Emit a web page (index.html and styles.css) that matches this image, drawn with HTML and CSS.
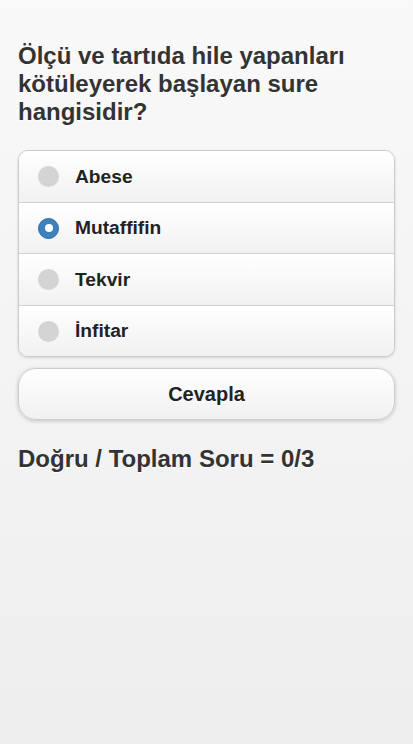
FILE: index.html
```html
<!DOCTYPE html>
<html lang="tr">
<head>
<meta charset="utf-8">
<title>Soru</title>
<link rel="stylesheet" href="styles.css">
</head>
<body>
<div class="page">
  <h2 class="question">Ölçü ve tartıda hile yapanları kötüleyerek başlayan sure hangisidir?</h2>
  <div class="options">
    <div class="option"><span class="radio"></span><span class="label">Abese</span></div>
    <div class="option"><span class="radio on"></span><span class="label">Mutaffifin</span></div>
    <div class="option"><span class="radio"></span><span class="label">Tekvir</span></div>
    <div class="option"><span class="radio"></span><span class="label">İnfitar</span></div>
  </div>
  <div class="btn">Cevapla</div>
  <h2 class="score">Doğru / Toplam Soru = 0/3</h2>
</div>
</body>
</html>
```

FILE: styles.css
```css
html, body {
  margin: 0;
  padding: 0;
}
body {
  min-height: 744px;
  background: linear-gradient(#f9f9f9, #eeeeee);
  font-family: "Liberation Sans", Arial, Helvetica, sans-serif;
  color: #333;
  text-shadow: 0 1px 0 #fff;
}
.page {
  padding: 42px 18px 0 18px;
}
.question {
  margin: 0 0 24px 0;
  font-size: 24px;
  line-height: 28px;
  font-weight: bold;
  color: #333;
}
.options {
  border: 1px solid #cccccc;
  border-radius: 10px;
  box-shadow: 0 1px 3px rgba(0,0,0,0.15);
  overflow: hidden;
}
.option {
  display: flex;
  align-items: center;
  height: 50px;
  padding-left: 19px;
  gap: 16px;
  background: linear-gradient(#ffffff, #f1f1f1);
  border-top: 1px solid #d0d0d0;
  font-size: 19.2px;
  font-weight: bold;
  color: #222;
}
.option:first-child {
  border-top: none;
  height: 51px;
}
.option:nth-child(3) {
  height: 51px;
}
.radio {
  width: 21px;
  height: 21px;
  border-radius: 50%;
  background: #d4d4d4;
  flex: none;
  box-sizing: border-box;
}
.radio.on {
  background: #3d82bd;
  border: 1px solid #2c6aa0;
  position: relative;
}
.radio.on::after {
  content: "";
  position: absolute;
  left: 5.5px;
  top: 5.5px;
  width: 8px;
  height: 8px;
  border-radius: 50%;
  background: #fff;
}
.btn {
  margin-top: 11px;
  height: 50px;
  line-height: 50px;
  border: 1px solid #cccccc;
  border-radius: 18px;
  background: linear-gradient(#ffffff, #f1f1f1);
  box-shadow: 0 1px 4px rgba(0,0,0,0.2);
  text-align: center;
  font-size: 20px;
  font-weight: bold;
  color: #222;
}
.score {
  margin: 25px 0 0 0;
  font-size: 24px;
  line-height: 28px;
  font-weight: bold;
  color: #333;
}
```
